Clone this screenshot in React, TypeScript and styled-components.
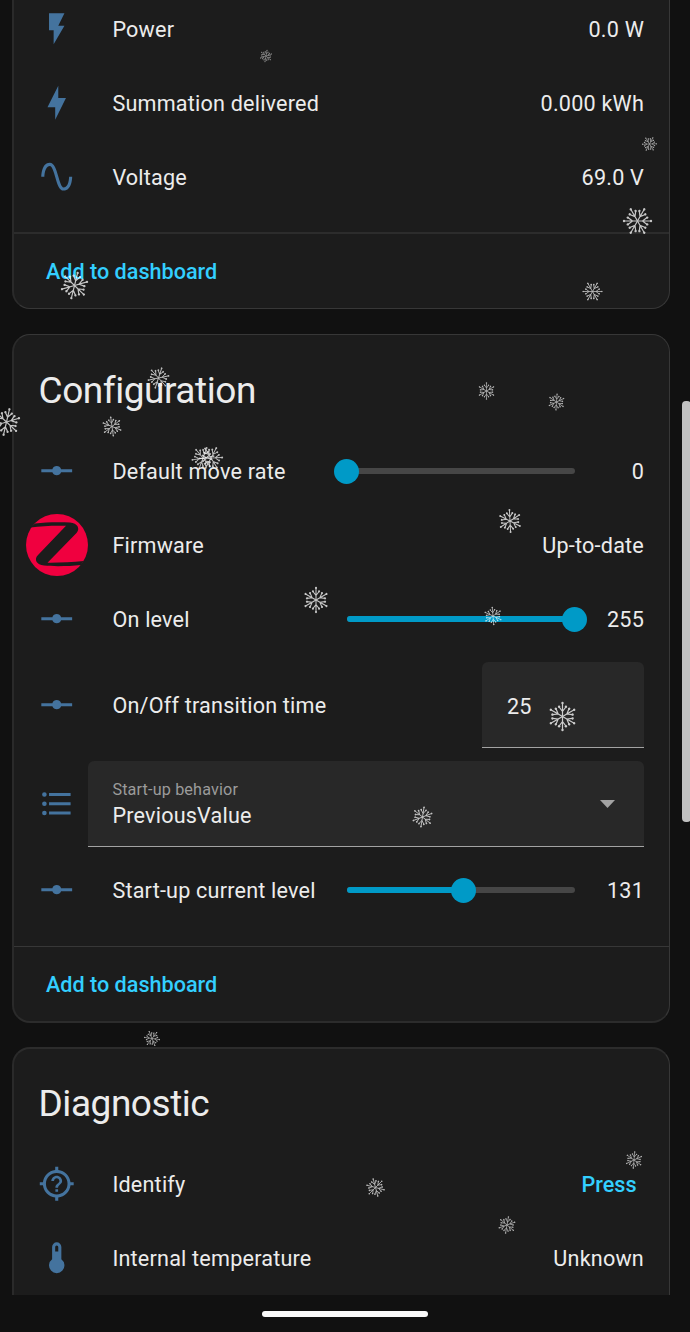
import React from "react";
import styled, { createGlobalStyle } from "styled-components";

const GlobalStyle = createGlobalStyle`
  * { box-sizing: border-box; }
  html, body { margin: 0; background: #111111; overflow: hidden; }
  body { font-family: Roboto, "Noto Sans", sans-serif; color: #ececec; }
`;

const Screen = styled.div`
  position: relative;
  display: flex;
  flex-direction: column;
  width: 690px;
  height: 1332px;
  overflow: hidden;
  background: #111111;
`;

const Scroller = styled.main`
  display: flex;
  flex-direction: column;
  flex: 0 0 1295px;
  padding: 0 20px 0 12px;
  overflow: hidden;
`;

const Card = styled.section<{ $thickTop?: boolean; $thickBottom?: boolean; $gap?: number }>`
  flex: none;
  margin-bottom: ${(p) => p.$gap ?? 25}px;
  background: #1c1c1c;
  border-style: solid;
  border-color: ${(p) => (p.$thickTop ? "#2c2c2c" : "#373737")} #373737
    ${(p) => (p.$thickBottom ? "#2c2c2c" : "#373737")} #2a2a2a;
  border-width: ${(p) => (p.$thickTop ? 2 : 1)}px 1px ${(p) => (p.$thickBottom ? 2 : 1)}px 2px;
  border-radius: 18px;
`;

const TopCard = styled(Card)`
  margin-top: -2px;
  border-top: 0;
  border-top-left-radius: 0;
  border-top-right-radius: 0;
`;

const LastCard = styled(Card)`
  height: 320px;
  margin-bottom: 0;
`;

const Title = styled.h1<{ $height: number }>`
  display: flex;
  align-items: center;
  height: ${(p) => p.$height}px;
  margin: 0;
  padding: 6px 24.5px 0;
  font-size: 37px;
  line-height: 48px;
  font-weight: 400;
  letter-spacing: -0.45px;
`;

const Rows = styled.div<{ $bottom?: number }>`
  display: flex;
  flex-direction: column;
  gap: 12px;
  padding: 0 25px ${(p) => p.$bottom ?? 25}px 12px;
`;

const Row = styled.div`
  display: flex;
  align-items: center;
  height: 62px;
`;

const FieldRow = styled(Row)<{ $after?: number }>`
  height: 86px;
  margin-bottom: ${(p) => p.$after ?? 0}px;
`;

const Badge = styled.span`
  display: flex;
  align-items: center;
  justify-content: center;
  flex: 0 0 62px;
  height: 62px;
  color: #44739e;
`;

const Name = styled.span`
  flex: 1;
  padding: 1px 0 0 24.4px;
  font-size: 21.6px;
  line-height: 30px;
  letter-spacing: 0.2px;
  white-space: nowrap;
`;

const Value = styled.span`
  padding-top: 1px;
  font-size: 21.6px;
  line-height: 30px;
  letter-spacing: 0.2px;
  text-align: right;
  white-space: nowrap;
`;

const Action = styled.button`
  padding: 1px 0 0;
  border: 0;
  background: none;
  color: #33cfff;
  font: 500 21.6px/30px Roboto, sans-serif;
  letter-spacing: 0;
`;

const PressAction = styled(Action)`
  margin-right: 7.5px;
`;

const Footer = styled.footer<{ $thick?: boolean }>`
  display: flex;
  align-items: center;
  height: ${(p) => (p.$thick ? 76 : 75)}px;
  padding-left: 32px;
  border-top: ${(p) => (p.$thick ? "2px solid #2c2c2c" : "1px solid #373737")};
`;

const Slider = styled.div`
  position: relative;
  width: 228px;
  height: 6px;
  border-radius: 3px;
  background: #464646;
`;

const SliderFill = styled.div`
  height: 6px;
  border-radius: 3px;
  background: #009ac7;
`;

const SliderKnob = styled.div`
  position: absolute;
  top: -9.5px;
  width: 25px;
  height: 25px;
  margin-left: -12.7px;
  border-radius: 50%;
  background: #009ac7;
`;

const SliderValue = styled(Value)`
  width: 69px;
`;

const NumberField = styled.div`
  display: flex;
  align-items: center;
  width: 162px;
  height: 86px;
  padding: 3px 0 0 25px;
  background: #282828;
  border-bottom: 1px solid #a3a3a3;
  border-radius: 6px 6px 0 0;
  font-size: 21.6px;
  letter-spacing: 0.2px;
`;

const SelectField = styled.div`
  display: flex;
  align-items: center;
  justify-content: space-between;
  flex: 1;
  height: 86px;
  padding: 0 29px 0 24.4px;
  background: #282828;
  border-bottom: 1px solid #a3a3a3;
  border-radius: 6px 6px 0 0;
`;

const SelectText = styled.div`
  display: flex;
  flex-direction: column;
  padding-top: 1px;
`;

const SelectLabel = styled.span`
  color: #9b9b9b;
  font-size: 16.2px;
  line-height: 22px;
  letter-spacing: 0.15px;
`;

const SelectValue = styled.span`
  font-size: 21.6px;
  line-height: 29px;
  letter-spacing: 0.2px;
`;

const NavBar = styled.nav`
  display: flex;
  flex: 1;
  justify-content: center;
  padding-top: 16px;
`;

const HomePill = styled.div`
  width: 166px;
  height: 6px;
  border-radius: 3px;
  background: #fafafa;
`;

const ScrollThumb = styled.div`
  position: absolute;
  top: 401px;
  right: -1px;
  width: 9px;
  height: 421px;
  border-radius: 4px;
  background: #c1c1c1;
`;

const SnowLayer = styled.svg`
  position: absolute;
  top: 0;
  left: 0;
  pointer-events: none;
`;

const paths = {
  flash: "M7,2V13H10V22L17,10H13L17,2H7Z",
  bolt: "M11 15H6L13 1V9H18L11 23V15Z",
  sine: "M16.5,21C13.5,21 12.31,16.76 11.05,12.28C10.14,9.04 9,5 7.5,5C4.11,5 4,11.93 4,12H2C2,11.63 2.06,3 7.5,3C10.5,3 11.71,7.25 12.97,11.74C13.83,14.8 15,19 16.5,19C19.94,19 20.03,12.07 20.03,12H22.03C22.03,12.37 21.97,21 16.5,21Z",
  vertex:
    "M2 11H9.17C9.58 9.83 10.69 9 12 9S14.42 9.83 14.83 11H22V13H14.83C14.42 14.17 13.31 15 12 15S9.58 14.17 9.17 13H2V11Z",
  list: "M7,5H21V7H7V5M7,13V11H21V13H7M4,4.5A1.5,1.5 0 0,1 5.5,6A1.5,1.5 0 0,1 4,7.5A1.5,1.5 0 0,1 2.5,6A1.5,1.5 0 0,1 4,4.5M4,10.5A1.5,1.5 0 0,1 5.5,12A1.5,1.5 0 0,1 4,13.5A1.5,1.5 0 0,1 2.5,12A1.5,1.5 0 0,1 4,10.5M7,19V17H21V19H7M4,16.5A1.5,1.5 0 0,1 5.5,18A1.5,1.5 0 0,1 4,19.5A1.5,1.5 0 0,1 2.5,18A1.5,1.5 0 0,1 4,16.5Z",
  question:
    "M3.05 13H1V11H3.05C3.5 6.83 6.83 3.5 11 3.05V1H13V3.05C17.17 3.5 20.5 6.83 20.95 11H23V13H20.95C20.5 17.17 17.17 20.5 13 20.95V23H11V20.95C6.83 20.5 3.5 17.17 3.05 13M12 5A7 7 0 0 0 5 12A7 7 0 0 0 12 19A7 7 0 0 0 19 12A7 7 0 0 0 12 5M11.13 17.25H12.88V15.5H11.13V17.25M12 6.75C10.07 6.75 8.5 8.32 8.5 10.25H10.25C10.25 9.28 11.03 8.5 12 8.5S13.75 9.28 13.75 10.25C13.75 12 11.13 11.78 11.13 14.63H12.88C12.88 12.66 15.5 12.44 15.5 10.25C15.5 8.32 13.93 6.75 12 6.75Z",
  thermometer: "M15 13V5A3 3 0 0 0 9 5V13A5 5 0 1 0 15 13M12 4A1 1 0 0 1 13 5V8H11V5A1 1 0 0 1 12 4Z",
};

const Icon = ({ name }: { name: keyof typeof paths }) => (
  <Badge>
    <svg width="38" height="38" viewBox="-0.15 -0.15 24.65 24.65" fill="currentColor">
      <path d={paths[name]} />
    </svg>
  </Badge>
);

const ZigbeeLogo = () => (
  <Badge>
    <svg width="62" height="62" viewBox="0 0 62 62">
      <circle cx="31" cy="31" r="31" fill="#f0003f" />
      <path
        d="M9 9.400C20 8.200 34 7.900 44 8.600C51.500 9.200 54.500 14.800 50.500 19L21.500 48.700C34 48.800 46 48.200 57.800 47L54.800 51C43 52.300 28 52.600 18 51.600C10.500 50.800 7.800 45.500 11.800 41.300L40 11.800C27 11.500 16 12 4.500 13.400Z"
        fill="#1c1c1c"
      />
    </svg>
  </Badge>
);

const SensorRow = ({ icon, name, value }: { icon: keyof typeof paths; name: string; value: string }) => (
  <Row>
    <Icon name={icon} />
    <Name>{name}</Name>
    <Value>{value}</Value>
  </Row>
);

const SliderRow = ({ name, value, max = 255 }: { name: string; value: number; max?: number }) => {
  const percent = `${(value / max) * 100}%`;
  return (
    <Row>
      <Icon name="vertex" />
      <Name>{name}</Name>
      <Slider>
        <SliderFill style={{ width: percent }} />
        <SliderKnob style={{ left: percent }} />
      </Slider>
      <SliderValue>{value}</SliderValue>
    </Row>
  );
};

// x, y, radius, rotation, opacity
const flakes: [number, number, number, number, number][] = [
  [266, 56, 6.2, 10, 0.6],
  [649.5, 144, 7.5, 28, 0.65],
  [637.5, 221, 14.5, 30, 0.75],
  [592.5, 291.5, 10, 30, 0.7],
  [74.5, 285.5, 14, 14, 0.75],
  [158.5, 378, 11, 18, 0.7],
  [486.5, 391, 8.7, 0, 0.68],
  [556.5, 402, 8.5, 4, 0.68],
  [6.5, 422, 14, 13, 0.75],
  [112, 426.5, 10, -8, 0.7],
  [203, 458, 11.5, 20, 0.7],
  [211, 458, 12, 28, 0.72],
  [510, 521, 11.8, -3, 0.75],
  [316, 600, 13, 0, 0.75],
  [493, 616, 9.2, -5, 0.7],
  [562.5, 716.5, 14.5, 0, 0.77],
  [422.5, 817, 10.5, 9, 0.72],
  [152, 1038.5, 8, -22, 0.68],
  [634, 1160, 8.7, 5, 0.66],
  [375.5, 1187.5, 9.5, -15, 0.7],
  [507, 1225, 8.8, 10, 0.66],
];

const Snow = () => (
  <SnowLayer width="690" height="1332" viewBox="0 0 690 1332">
    <defs>
      <g id="arm">
        <path
          d="M0 0V-13.500M0 -5L-3.400 -9.500M0 -5L3.400 -9.500"
          fill="none"
          stroke="#fff"
          strokeWidth="1.2"
        />
        <g fill="#fff">
          <circle cy="-13.500" r="1.2" />
          <circle cx="-3.400" cy="-9.700" r="1.2" />
          <circle cx="3.400" cy="-9.700" r="1.2" />
        </g>
      </g>
      <g id="flake">
        {[0, 60, 120, 180, 240, 300].map((a) => (
          <use key={a} href="#arm" transform={`rotate(${a})`} />
        ))}
      </g>
    </defs>
    {flakes.map(([x, y, r, rotation, opacity], i) => (
      <use
        key={i}
        href="#flake"
        opacity={opacity}
        transform={`translate(${x} ${y}) rotate(${rotation}) scale(${r / 14.5})`}
      />
    ))}
  </SnowLayer>
);

export default function App() {
  return (
    <Screen>
      <GlobalStyle />
      <Scroller>
        <TopCard>
          <Rows $bottom={24}>
            <SensorRow icon="flash" name="Power" value="0.0 W" />
            <SensorRow icon="bolt" name="Summation delivered" value="0.000 kWh" />
            <SensorRow icon="sine" name="Voltage" value="69.0 V" />
          </Rows>
          <Footer $thick>
            <Action>Add to dashboard</Action>
          </Footer>
        </TopCard>

        <Card $thickBottom $gap={24}>
          <Title $height={105}>Configuration</Title>
          <Rows>
            <SliderRow name="Default move rate" value={0} />
            <Row>
              <ZigbeeLogo />
              <Name>Firmware</Name>
              <Value>Up-to-date</Value>
            </Row>
            <SliderRow name="On level" value={255} />
            <FieldRow $after={1}>
              <Icon name="vertex" />
              <Name>On/Off transition time</Name>
              <NumberField>25</NumberField>
            </FieldRow>
            <FieldRow>
              <Icon name="list" />
              <SelectField>
                <SelectText>
                  <SelectLabel>Start-up behavior</SelectLabel>
                  <SelectValue>PreviousValue</SelectValue>
                </SelectText>
                <svg width="15" height="8" viewBox="0 0 15 8">
                  <path d="M0 0H15L7.500 8Z" fill="#a3a3a3" />
                </svg>
              </SelectField>
            </FieldRow>
            <SliderRow name="Start-up current level" value={131} />
          </Rows>
          <Footer>
            <Action>Add to dashboard</Action>
          </Footer>
        </Card>

        <LastCard $thickTop>
          <Title $height={104}>Diagnostic</Title>
          <Rows>
            <Row>
              <Icon name="question" />
              <Name>Identify</Name>
              <PressAction>Press</PressAction>
            </Row>
            <SensorRow icon="thermometer" name="Internal temperature" value="Unknown" />
          </Rows>
        </LastCard>
      </Scroller>
      <NavBar>
        <HomePill />
      </NavBar>
      <ScrollThumb />
      <Snow />
    </Screen>
  );
}
